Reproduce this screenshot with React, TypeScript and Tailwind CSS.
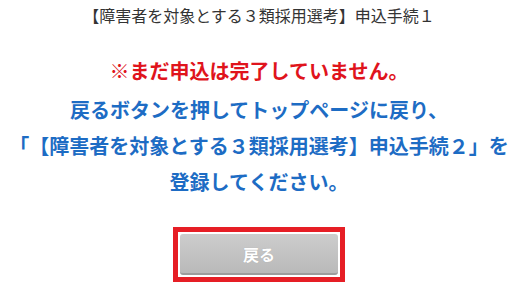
import React from "react";

export default function App() {
  return (
    <div
      className="w-[518px] bg-white text-center [text-spacing-trim:space-all]"
      style={{ fontFamily: '"Noto Sans CJK JP", "Noto Sans", sans-serif' }}
    >
      <p className="pt-[3px] text-[16px] leading-[24px] text-[#333333]">
        【障害者を対象とする３類採用選考】申込手続１
      </p>
      <p className="mt-[26px] text-[20px] font-bold leading-[36px] text-[#e0141c]">
        ※まだ申込は完了していません。
      </p>
      <p className="mt-[3px] text-[20px] font-bold leading-[36px] text-[#1d6cc4]">
        戻るボタンを押してトップページに戻り、
        <br />
        「【障害者を対象とする３類採用選考】申込手続２」を
        <br />
        登録してください。
      </p>
      <div className="mt-[27px] flex justify-center">
        <div className="border-[5px] border-[#e61e25] bg-white p-[2px]">
          <button className="flex h-[41px] w-[158px] items-center justify-center rounded-[3px] border-b-2 border-[#9c9c9c] bg-gradient-to-b from-[#cdcdcd] to-[#b9b9b9] text-[16px] font-bold text-white [text-shadow:0_0_1px_rgba(0,0,0,0.15)]">
            戻る
          </button>
        </div>
      </div>
    </div>
  );
}
